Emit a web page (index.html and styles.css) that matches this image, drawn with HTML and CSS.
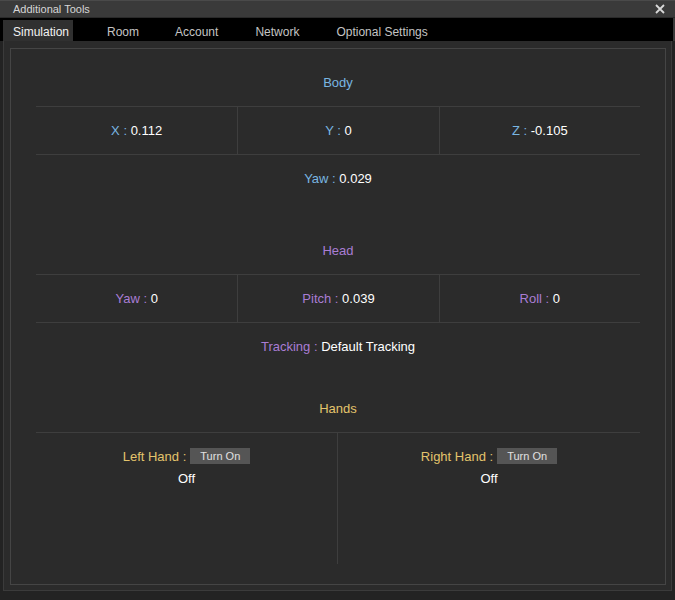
FILE: index.html
```html
<!DOCTYPE html>
<html>
<head>
<meta charset="utf-8">
<link rel="stylesheet" href="styles.css">
</head>
<body>
<div class="window">
  <div class="titlebar">
    <span class="title">Additional Tools</span>
    <svg class="close" width="10" height="10" viewBox="0 0 10 10"><path d="M1 1L9 9M9 1L1 9" stroke="#d8d8d8" stroke-width="1.8"/></svg>
  </div>
  <div class="tabs">
    <div class="tab active">Simulation</div>
    <div class="tab t-room">Room</div>
    <div class="tab t-account">Account</div>
    <div class="tab t-network">Network</div>
    <div class="tab t-optional">Optional Settings</div>
  </div>
  <div class="content">
    <div class="frame">
      <div class="panel">
        <section class="section body-sec">
          <div class="heading">Body</div>
          <div class="grid3">
            <div class="cell"><span class="lbl">X :</span> 0.112</div>
            <div class="cell"><span class="lbl">Y :</span> 0</div>
            <div class="cell"><span class="lbl">Z :</span> -0.105</div>
          </div>
          <div class="extra"><span class="lbl">Yaw :</span> 0.029</div>
        </section>
        <section class="section head-sec">
          <div class="heading">Head</div>
          <div class="grid3">
            <div class="cell"><span class="lbl">Yaw :</span> 0</div>
            <div class="cell"><span class="lbl">Pitch :</span> 0.039</div>
            <div class="cell"><span class="lbl">Roll :</span> 0</div>
          </div>
          <div class="extra"><span class="lbl">Tracking :</span> Default Tracking</div>
        </section>
        <section class="section hands-sec">
          <div class="heading">Hands</div>
          <div class="grid2">
            <div class="hcol">
              <div class="hrow"><span class="lbl">Left Hand :</span><button class="btn">Turn On</button></div>
              <div class="state">Off</div>
            </div>
            <div class="hcol">
              <div class="hrow"><span class="lbl">Right Hand :</span><button class="btn">Turn On</button></div>
              <div class="state">Off</div>
            </div>
          </div>
        </section>
      </div>
    </div>
  </div>
</div>
</body>
</html>
```

FILE: styles.css
```css
* { box-sizing: border-box; }
html, body { margin: 0; padding: 0; }
body {
  background: #222222;
  font-family: "Liberation Sans", Arial, sans-serif;
  width: 675px;
  height: 600px;
  overflow: hidden;
}
.window {
  width: 675px;
  height: 600px;
  background: #232323;
  display: flex;
  flex-direction: column;
}
.titlebar {
  height: 18px;
  background: #3a3a3a;
  border-top: 1px solid #4a4a4a;
  border-bottom: 1px solid #2a2a2a;
  display: flex;
  align-items: center;
  justify-content: space-between;
  padding: 0 10px 0 13px;
}
.title {
  color: #d6d6d6;
  font-size: 11px;
}
.close { display: block; }
.tabs {
  height: 23px;
  background: #000;
  display: flex;
  align-items: flex-end;
  padding-left: 3px;
  border-right: 2px solid #3a3a3a;
}
.tab {
  height: 21px;
  padding-top: 3px;
  line-height: 18px;
  font-size: 12px;
  color: #c4c4c4;
}
.tab.active {
  width: 70px;
  padding-left: 10px;
  background: #303030;
  color: #f2f2f2;
}
.t-room { margin-left: 34px; }
.t-account { margin-left: 36px; }
.t-network { margin-left: 37px; }
.t-optional { margin-left: 37px; }
.content {
  flex: 1;
  padding: 0 3px 9px 3px;
  background: #232323;
}
.frame {
  height: 100%;
  background: #2b2b2b;
  border: 1px solid #3b3b3b;
  border-top: none;
  padding: 7px 5px 5px 6px;
}
.panel {
  height: 100%;
  border: 1px solid #454545;
  padding: 22px 25px 0 25px;
  color: #ffffff;
  font-size: 13px;
}
.section { text-align: center; }
.head-sec { margin-top: 48px; }
.hands-sec { margin-top: 38px; }
.heading {
  height: 24px;
  line-height: 24px;
}
.body-sec .heading, .body-sec .lbl { color: #79b6e2; }
.head-sec .heading, .head-sec .lbl { color: #a97dd4; }
.hands-sec .heading, .hands-sec .lbl { color: #e4c46c; }
.grid3 {
  margin-top: 11px;
  display: grid;
  grid-template-columns: 1fr 1fr 1fr;
  border-top: 1px solid #3e3e3e;
  border-bottom: 1px solid #3e3e3e;
}
.cell {
  height: 47px;
  line-height: 47px;
}
.cell + .cell { border-left: 1px solid #3e3e3e; }
.extra {
  margin-top: 12px;
  height: 24px;
  line-height: 24px;
}
.grid2 {
  margin-top: 11px;
  display: grid;
  grid-template-columns: 301px 1fr;
  border-top: 1px solid #3e3e3e;
}
.hcol {
  height: 131px;
  padding-top: 13px;
}
.hcol + .hcol { border-left: 1px solid #3e3e3e; }
.hrow {
  display: flex;
  justify-content: center;
  align-items: center;
  gap: 4px;
  height: 20px;
}
.btn {
  width: 60px;
  height: 16px;
  padding: 0;
  border: none;
  background: #555555;
  color: #e0e0e0;
  font-family: "Liberation Sans", Arial, sans-serif;
  font-size: 11px;
  line-height: 16px;
}
.state {
  margin-top: 3px;
  height: 20px;
  line-height: 20px;
}
```
